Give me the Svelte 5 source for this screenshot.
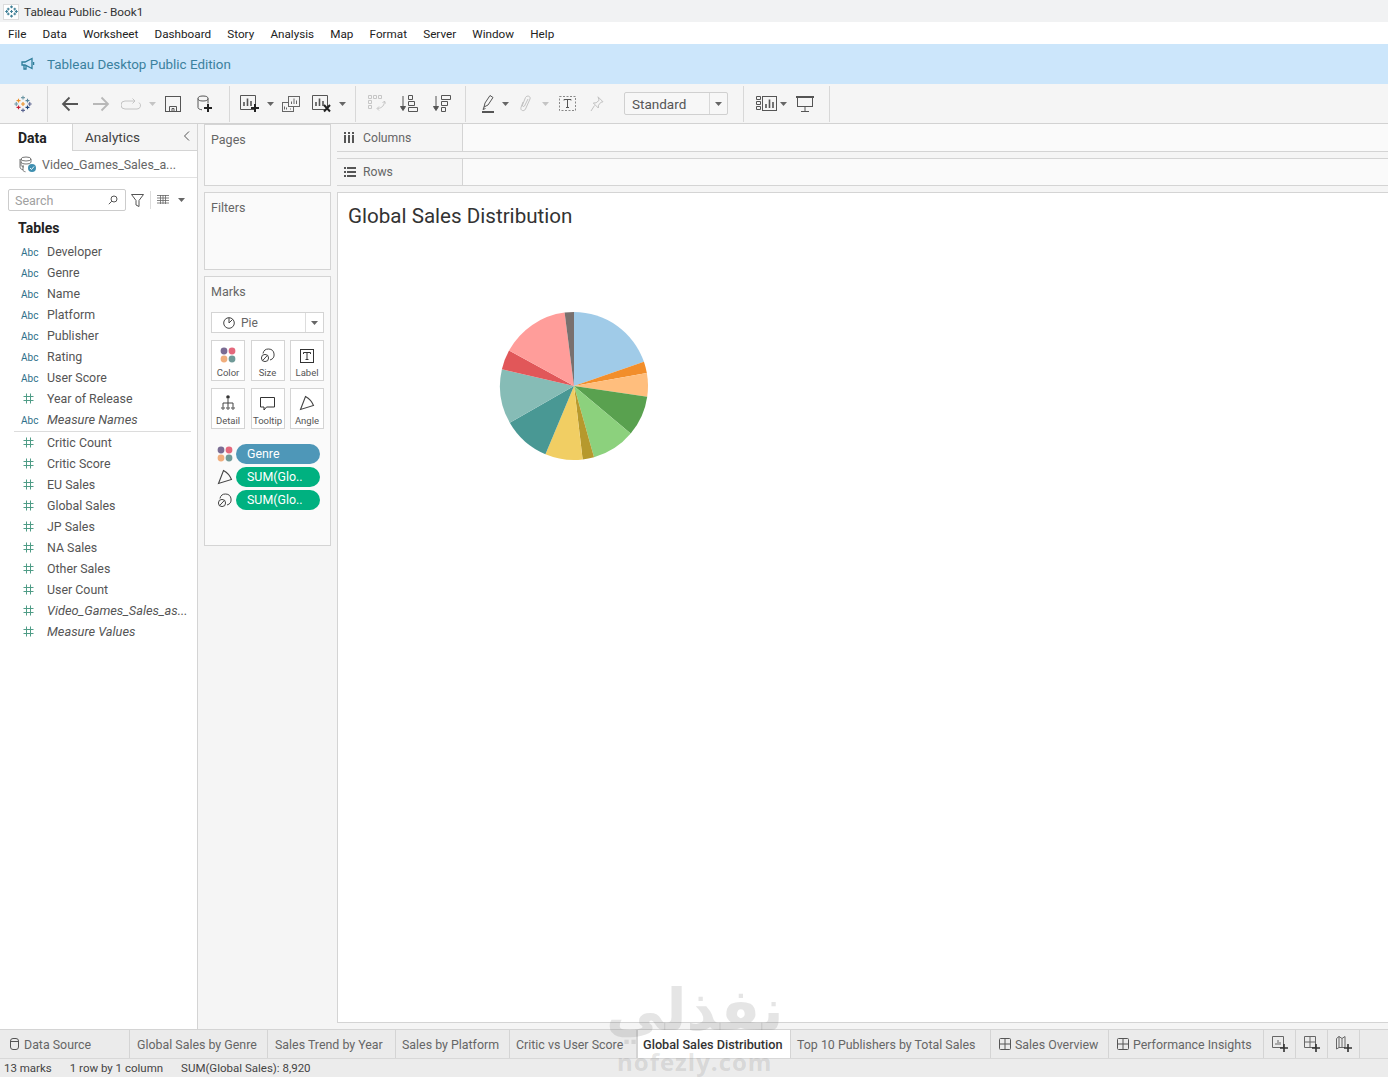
<script>
	const menu = ['File', 'Data', 'Worksheet', 'Dashboard', 'Story', 'Analysis', 'Map', 'Format', 'Server', 'Window', 'Help'];

	const dims = [
		{ name: 'Developer', kind: 'abc' },
		{ name: 'Genre', kind: 'abc' },
		{ name: 'Name', kind: 'abc' },
		{ name: 'Platform', kind: 'abc' },
		{ name: 'Publisher', kind: 'abc' },
		{ name: 'Rating', kind: 'abc' },
		{ name: 'User Score', kind: 'abc' },
		{ name: 'Year of Release', kind: 'num' },
		{ name: 'Measure Names', kind: 'abc', gen: true }
	];

	const measures = [
		{ name: 'Critic Count' },
		{ name: 'Critic Score' },
		{ name: 'EU Sales' },
		{ name: 'Global Sales' },
		{ name: 'JP Sales' },
		{ name: 'NA Sales' },
		{ name: 'Other Sales' },
		{ name: 'User Count' },
		{ name: 'Video_Games_Sales_as...', gen: true },
		{ name: 'Measure Values', gen: true }
	];

	// slice end angles in degrees, clockwise from 12 o'clock
	const slices = [
		[70.9, '#a0cbe8'],
		[79.9, '#f28e2b'],
		[98.3, '#ffbe7d'],
		[130, '#59a14f'],
		[164.3, '#8cd17d'],
		[173.3, '#b6992d'],
		[202.7, '#f1ce63'],
		[240.2, '#499894'],
		[283, '#86bcb6'],
		[298.6, '#e15759'],
		[352.7, '#ff9d9a'],
		[360, '#79706e']
	];

	function pt(deg) {
		const a = (deg * Math.PI) / 180;
		return `${(75 + 74 * Math.sin(a)).toFixed(2)} ${(75 - 74 * Math.cos(a)).toFixed(2)}`;
	}

	const wedges = slices.map(([end, color], i) => {
		const start = i ? slices[i - 1][0] : 0;
		return { color, d: `M75 75L${pt(start)}A74 74 0 0 1 ${pt(end)}Z` };
	});

	const tabs = [
		{ name: 'Global Sales by Genre', cls: 'tab-genre' },
		{ name: 'Sales Trend by Year', cls: 'tab-trend' },
		{ name: 'Sales by Platform', cls: 'tab-platform' },
		{ name: 'Critic vs User Score', cls: 'tab-critic' },
		{ name: 'Global Sales Distribution', cls: 'active' },
		{ name: 'Top 10 Publishers by Total Sales', cls: 'tab-top' },
		{ name: 'Sales Overview', cls: 'tab-overview', dash: true },
		{ name: 'Performance Insights', cls: 'tab-perf', dash: true }
	];

	const plusses = [
		[12, 3.5, '#7099a6'], [6, 7.5, '#eb912b'], [18, 7.5, '#5b879b'], [12, 12, '#eb912b'],
		[3, 12, '#7099a6'], [21, 12, '#5b6591'], [6, 16.5, '#c72035'], [18, 16.5, '#1f447a'], [12, 20.5, '#5b6591']
	];
</script>

{#snippet caret(light = false)}
	<svg class="caret" class:light width="7" height="4" viewBox="0 0 7 4"><path d="M0 0h7L3.5 4z" /></svg>
{/snippet}

{#snippet logo(size, mono = false)}
	<svg width={size} height={size} viewBox="0 0 24 24" fill="none" stroke-width={mono ? 2 : 1.5}>
		{#each plusses as [x, y, c]}
			<path d="M{x - 2.6} {y}h5.2M{x} {y - 2.6}v5.2" stroke={mono ? '#3f7f96' : c} />
		{/each}
	</svg>
{/snippet}

{#snippet numIcon()}
	<svg class="hash" width="11" height="11" viewBox="0 0 11 11" fill="none" stroke="#4f9c86" stroke-width="1">
		<path d="M3.5 .5v10M7.5 .5v10M.5 3.5h10M.5 7.5h10" />
	</svg>
{/snippet}

{#snippet colorDots()}
	<svg width="16" height="16" viewBox="0 0 16 16">
		<circle cx="4" cy="4" r="3.4" fill="#7a6c93" />
		<circle cx="12" cy="4" r="3.4" fill="#e4687c" />
		<circle cx="4" cy="12" r="3.4" fill="#f0ae7d" />
		<circle cx="12" cy="12" r="3.4" fill="#6f9a98" />
	</svg>
{/snippet}

{#snippet sizeIcon()}
	<svg width="16" height="16" viewBox="0 0 16 16" fill="none" stroke="#444" stroke-width="1">
		<circle cx="5" cy="11" r="3.6" />
		<path d="M3 6.5A5.6 5.6 0 1 1 10 13" />
		<path d="M2.6 13.6L7.4 8.4" />
	</svg>
{/snippet}

{#snippet angleIcon()}
	<svg width="16" height="16" viewBox="0 0 16 16" fill="none" stroke="#444" stroke-width="1.1">
		<path d="M1.5 14.5L6.5 1.5C10 3.4 13 6.6 14.5 10.5z" />
	</svg>
{/snippet}

{#snippet dashIcon()}
	<svg width="12" height="12" viewBox="0 0 12 12" fill="none" stroke="#555" stroke-width="1">
		<rect x=".5" y=".5" width="11" height="11" rx="1" />
		<path d="M6 .5v11M.5 6h11" />
	</svg>
{/snippet}

<div class="app">
	<header class="title">
		<span class="app-ico">{@render logo(13, true)}</span>
		<span>Tableau Public - Book1</span>
	</header>

	<nav class="menu">
		{#each menu as m}
			<span>{m}</span>
		{/each}
	</nav>

	<div class="banner">
		<svg width="14" height="14" viewBox="0 0 14 14" fill="none" stroke="#2d7d9a" stroke-width="1.3">
			<path d="M1 5h3l7-3.5v10L4 8H1z" />
			<path d="M3 8v4h2V8.600" />
			<path d="M12.600 5v3" />
		</svg>
		<span>Tableau Desktop Public Edition</span>
	</div>

	<div class="toolbar">
		<span class="tool w30">{@render logo(18)}</span>
		<i class="sep m9"></i>
		<span class="tool w30 m7">
			<svg width="18" height="16" viewBox="0 0 18 16" fill="none" stroke="#555" stroke-width="1.8">
				<path d="M17 8H2M8.500 1.500L2 8l6.500 6.500" />
			</svg>
		</span>
		<span class="tool w30 m1">
			<svg width="18" height="16" viewBox="0 0 18 16" fill="none" stroke="#b8b8b8" stroke-width="1.8">
				<path d="M1 8h15M9.500 1.500L16 8l-6.500 6.500" />
			</svg>
		</span>
		<span class="tool w22 m4">
			<svg width="20" height="12" viewBox="0 0 20 12" fill="none" stroke="#c4c4c4" stroke-width="1">
				<path d="M13 3H4a3.500 3.500 0 0 0 0 8h12a3.500 3.500 0 0 0 2-6.400" />
				<path d="M11.500 .5L14 3l-2.500 2.500" />
			</svg>
		</span>
		<span class="tool w10 m5">{@render caret(true)}</span>
		<span class="tool w30 m1">
			<svg width="16" height="16" viewBox="0 0 16 16" fill="none" stroke="#555" stroke-width="1">
				<rect x=".5" y=".5" width="15" height="15" />
				<path d="M4.500 15.500v-5h7v5M7 15.500v-3h2v3" />
			</svg>
		</span>
		<span class="tool w30 m2">
			<svg width="16" height="18" viewBox="0 0 16 18" fill="none" stroke="#555" stroke-width="1">
				<ellipse cx="6" cy="3.500" rx="5" ry="2.500" />
				<path d="M1 3.500v9c0 1.200 1.600 2 4 2.300M11 3.500v5" />
				<path d="M11 9v8M7 13h8" stroke="#222" stroke-width="2" />
			</svg>
		</span>
		<i class="sep m9"></i>
		<span class="tool w30 m5">
			<svg width="20" height="18" viewBox="0 0 20 18" fill="none">
				<path d="M.5 .5h15v14H.5z" stroke="#555" />
				<path d="M4 11V7M7.500 11V3.500M11 11V6" stroke="#555" stroke-width="1.600" />
				<path d="M15 9v8M11 13h8" stroke="#222" stroke-width="2" />
			</svg>
		</span>
		<span class="tool w10">{@render caret()}</span>
		<span class="tool w30 m1">
			<svg width="18" height="16" viewBox="0 0 18 16" fill="none" stroke="#666">
				<rect x=".5" y="6.500" width="11" height="9" />
				<rect x="6.500" y=".5" width="11" height="10" fill="#f5f5f5" />
				<path d="M9.500 8V5.500M12 8V2.500M14.500 8V4.500M2.500 13.500v-3M4.500 13.500v-2M8.500 13.500v-1" />
			</svg>
		</span>
		<span class="tool w30 m1">
			<svg width="20" height="18" viewBox="0 0 20 18" fill="none">
				<path d="M.5 .5h15v14H.5z" stroke="#555" />
				<path d="M4 11V7M7.500 11V3.500M11 11V6" stroke="#555" stroke-width="1.600" />
				<path d="M12 10l6 6.500M18 10l-6 6.500" stroke="#222" stroke-width="2" />
			</svg>
		</span>
		<span class="tool w10">{@render caret()}</span>
		<i class="sep m8"></i>
		<span class="tool w30 m6">
			<svg width="18" height="17" viewBox="0 0 18 17" fill="none" stroke="#c6c6c6">
				<path d="M.5.5h3v3h-3zM5.500.5h3v3h-3zM10.500.5h3v3h-3zM.5 5.500h3v3h-3zM.5 10.500h3v3h-3z" />
				<path d="M16.500 6c0 4-2 7-7 7.500M14.500 8l2-2 1 2.500M11 11.500l-2 2 2 2" />
			</svg>
		</span>
		<span class="tool w30 m2">
			<svg width="18" height="17" viewBox="0 0 18 17" fill="none" stroke="#555">
				<path d="M3 1v13M.5 11.500L3 15.500l2.500-4z" fill="#555" />
				<path d="M8.500.5h4v4h-4zM8.500 6.500h6v4h-6zM8.500 12.500h9v4h-9z" />
			</svg>
		</span>
		<span class="tool w30 m3">
			<svg width="18" height="17" viewBox="0 0 18 17" fill="none" stroke="#555">
				<path d="M3 1v13M.5 11.500L3 15.500l2.500-4z" fill="#555" />
				<path d="M8.500.5h9v4h-9zM8.500 6.500h6v4h-6zM8.500 12.500h4v4h-4z" />
			</svg>
		</span>
		<i class="sep m8"></i>
		<span class="tool w20 m12">
			<svg width="14" height="18" viewBox="0 0 14 18" fill="none" stroke="#555">
				<path d="M3 12l1-4 5-7.500 3 2-5 7.500zM3 12l-1 2.500 2.500-1" />
				<path d="M1 17h12" stroke-width="2" />
			</svg>
		</span>
		<span class="tool w10 m2">{@render caret()}</span>
		<span class="tool w20 m5">
			<svg width="13" height="17" viewBox="0 0 13 17" fill="none" stroke="#c2c2c2">
				<path d="M4 7l-2 5.500c-1 3 3 4.500 4.500 1.500l4.500-10c1-3-3-4-4.500-1.500L3.500 10c-.5 1.500 1 2 2 1L9 4" />
			</svg>
		</span>
		<span class="tool w10 m5">{@render caret(true)}</span>
		<span class="tool w20 m7">
			<svg width="17" height="15" viewBox="0 0 17 15" fill="none" stroke="#888">
				<rect x=".5" y=".5" width="16" height="14" stroke-dasharray="2 1.500" />
				<path d="M5 4.500V3.500h7v1M8.500 3.500v8M7 11.500h3" stroke="#555" />
			</svg>
		</span>
		<span class="tool w20 m10">
			<svg width="14" height="16" viewBox="0 0 14 16" fill="none" stroke="#c2c2c2">
				<path d="M8 .8l5 5-2 .4-2.500 3-.2 2.800-5-5 2.800-.2 3-2.500z" />
				<path d="M4.500 9.500L1 15" />
			</svg>
		</span>
		<div class="std m17">
			<span>Standard</span>
			<b>{@render caret()}</b>
		</div>
		<i class="sep m15"></i>
		<span class="tool w24 m10">
			<svg width="21" height="15" viewBox="0 0 21 15" fill="none" stroke="#555">
				<path d="M.5.5h4v3h-4zM.5 5.500h4v3h-4zM.5 10.500h4v3h-4z" />
				<rect x="6.500" y=".5" width="14" height="14" />
				<path d="M10 12V8M13.500 12V3.500M17 12V6" stroke-width="1.600" />
			</svg>
		</span>
		<span class="tool w10">{@render caret()}</span>
		<span class="tool w30 m2">
			<svg width="18" height="16" viewBox="0 0 18 16" fill="none" stroke="#555">
				<path d="M0 1h18" stroke-width="2" />
				<rect x="1.500" y="1" width="15" height="9.500" />
				<path d="M9 10.500v5M5 15.500h8" />
			</svg>
		</span>
		<i class="sep m9"></i>
	</div>

	<main class="main">
		<aside class="data">
			<div class="data-tabs">
				<span class="dt on">Data</span>
				<span class="dt">Analytics</span>
				<svg class="collapse" width="7" height="10" viewBox="0 0 7 10" fill="none" stroke="#555">
					<path d="M6 .5L1.500 5 6 9.500" />
				</svg>
			</div>
			<div class="source">
				<svg width="18" height="17" viewBox="0 0 18 17" fill="none" stroke="#666" stroke-width=".9">
					<ellipse cx="7" cy="3" rx="5" ry="2" />
					<path d="M2 3v3c0 1 2 2 5 2s5-1 5-2V3M2 6v3c0 1 1 1.800 3 2" />
					<path d="M1 3v8c0 1.500 1 2.200 3 2.800M4 9v5c0 1 1 1.500 2.500 1.800" />
					<circle cx="13" cy="12" r="4" fill="#3f8fb0" stroke="none" />
					<path d="M11 12l1.500 1.500 2.500-3" stroke="#fff" />
				</svg>
				<span>Video_Games_Sales_a...</span>
			</div>
			<div class="search-row">
				<div class="search">
					<span>Search</span>
					<svg width="10" height="10" viewBox="0 0 10 10" fill="none" stroke="#555">
						<circle cx="6" cy="4" r="3" />
						<path d="M3.800 6.200L.8 9.200" />
					</svg>
				</div>
				<svg class="funnel" width="13" height="13" viewBox="0 0 13 13" fill="none" stroke="#555">
					<path d="M.5.500h12L8 6.500v6l-3-1.500V6.500z" />
				</svg>
				<i class="vsep"></i>
				<svg width="12" height="10" viewBox="0 0 12 10" fill="none" stroke="#666">
					<path d="M0 .5h12M0 3h12M0 5.500h12M0 8h12M3.500 0v9M6 0v9M8.500 0v9" stroke-width=".8" />
				</svg>
				<span class="list-caret">{@render caret()}</span>
			</div>
			<h3>Tables</h3>
			<ul class="fields">
				{#each dims as f}
					<li>
						<span class="ficon">
							{#if f.kind === 'abc'}<span class="abc">Abc</span>{:else}{@render numIcon()}{/if}
						</span>
						<span class:gen={f.gen}>{f.name}</span>
					</li>
				{/each}
			</ul>
			<hr />
			<ul class="fields">
				{#each measures as f}
					<li>
						<span class="ficon">{@render numIcon()}</span>
						<span class:gen={f.gen}>{f.name}</span>
					</li>
				{/each}
			</ul>
		</aside>

		<section class="cards">
			<div class="card pages">Pages</div>
			<div class="card filters">Filters</div>
			<div class="card marks">
				<div>Marks</div>
				<div class="mark-type">
					<svg width="12" height="12" viewBox="0 0 12 12" fill="none" stroke="#444">
						<circle cx="6" cy="6" r="5.300" />
						<path d="M6 .8V6l3.600-3.600" />
					</svg>
					<span>Pie</span>
					<b>{@render caret()}</b>
				</div>
				<div class="mark-btns">
					<div class="mb">{@render colorDots()}<span>Color</span></div>
					<div class="mb">{@render sizeIcon()}<span>Size</span></div>
					<div class="mb">
						<svg width="14" height="14" viewBox="0 0 14 14" fill="none" stroke="#333">
							<rect x=".5" y=".5" width="13" height="13" />
							<path d="M3.500 5V3.500h7V5M7 3.500v7M5.500 10.500h3" />
						</svg>
						<span>Label</span>
					</div>
					<div class="mb">
						<svg width="14" height="16" viewBox="0 0 14 16" fill="none" stroke="#444">
							<circle cx="7" cy="2" r="1.800" fill="#333" stroke="none" />
							<path d="M7 4v4M2 11V8h10v3M7 8v3" />
							<circle cx="2" cy="13" r="1.200" />
							<circle cx="7" cy="13" r="1.200" />
							<circle cx="12" cy="13" r="1.200" />
						</svg>
						<span>Detail</span>
					</div>
					<div class="mb">
						<svg width="15" height="14" viewBox="0 0 15 14" fill="none" stroke="#333">
							<path d="M.5.5h14v9.500H6.500L4 13v-3H.5z" />
						</svg>
						<span>Tooltip</span>
					</div>
					<div class="mb">{@render angleIcon()}<span>Angle</span></div>
				</div>
				<div class="pill-row">
					{@render colorDots()}
					<span class="pill blue">Genre</span>
				</div>
				<div class="pill-row">
					{@render angleIcon()}
					<span class="pill">SUM(Glo..</span>
				</div>
				<div class="pill-row">
					{@render sizeIcon()}
					<span class="pill">SUM(Glo..</span>
				</div>
			</div>
		</section>

		<section class="work">
			<div class="shelf">
				<div class="shelf-label">
					<svg width="10" height="11" viewBox="0 0 10 11" fill="#555">
						<path d="M0 3h2v8H0zM4 3h2v8H4zM8 3h2v8H8zM0 0h2v2H0zM4 0h2v2H4zM8 0h2v2H8z" />
					</svg>
					<span>Columns</span>
				</div>
			</div>
			<div class="shelf">
				<div class="shelf-label rows">
					<svg width="12" height="10" viewBox="0 0 12 10" fill="#555">
						<path d="M0 0h2v2H0zM3 0h9v2H3zM0 4h2v2H0zM3 4h9v2H3zM0 8h2v2H0zM3 8h9v2H3z" />
					</svg>
					<span>Rows</span>
				</div>
			</div>
			<div class="viz">
				<h1>Global Sales Distribution</h1>
				<svg class="pie" width="150" height="150" viewBox="0 0 150 150">
					{#each wedges as w}
						<path d={w.d} fill={w.color} />
					{/each}
				</svg>
			</div>
		</section>
	</main>

	<footer class="tabs">
		<div class="tab tab-ds">
			<svg width="9" height="12" viewBox="0 0 9 12" fill="none" stroke="#555">
				<rect x=".5" y=".5" width="8" height="11" rx="2.500" />
				<path d="M.5 3.500h8" />
			</svg>
			<span>Data Source</span>
		</div>
		{#each tabs as t}
			<div class="tab {t.cls}">
				{#if t.dash}{@render dashIcon()}{/if}
				<span>{t.name}</span>
			</div>
		{/each}
		<div class="tab add">
			<svg width="16" height="16" viewBox="0 0 16 16" fill="none" stroke="#666">
				<path d="M.5.5h11v11H.5zM4 9V7M6 9V4M8 9V6" />
				<path d="M12 8v8M8 12h8" stroke="#333" stroke-width="1.600" />
			</svg>
		</div>
		<div class="tab add">
			<svg width="16" height="16" viewBox="0 0 16 16" fill="none" stroke="#666">
				<path d="M.5.5h11v11H.5zM6 .5v11M.5 6h11" />
				<path d="M12 8v8M8 12h8" stroke="#333" stroke-width="1.600" />
			</svg>
		</div>
		<div class="tab add">
			<svg width="16" height="16" viewBox="0 0 16 16" fill="none" stroke="#666">
				<path d="M.5 2.500L3 .5l3 2 3-2v11H3L.5 13zM3 .5v11M6 2.500v9" />
				<path d="M12 8v8M8 12h8" stroke="#333" stroke-width="1.600" />
			</svg>
		</div>
	</footer>

	<div class="status">
		<span>13 marks</span>
		<span>1 row by 1 column</span>
		<span>SUM(Global Sales): 8,920</span>
	</div>

	<div class="mark-ar" lang="ar" dir="rtl">نفذلي</div>
	<div class="mark-en">nofezly.com</div>
</div>

<style>
	:global(body) {
		margin: 0;
		background: #fff;
	}

	.app {
		position: relative;
		width: 1388px;
		height: 1077px;
		overflow: hidden;
		display: flex;
		flex-direction: column;
		font-family: Roboto, 'Liberation Sans', sans-serif;
		font-size: 11.800px;
		color: #555;
	}

	svg {
		display: block;
		flex: none;
	}

	.title {
		height: 22px;
		flex: none;
		box-sizing: border-box;
		padding: 1px 0 0 3px;
		display: flex;
		align-items: center;
		gap: 5px;
		background: #f1f2f3;
		color: #333;
	}

	.app-ico {
		width: 16px;
		height: 16px;
		display: flex;
		align-items: center;
		justify-content: center;
		background: #fff;
		outline: 1px solid #dcdcdc;
		outline-offset: -1px;
	}

	.menu {
		height: 22px;
		flex: none;
		box-sizing: border-box;
		padding: 1px 0 0 8px;
		display: flex;
		align-items: center;
		gap: 16.200px;
		background: #fff;
		color: #222;
		font-size: 11.700px;
	}

	.banner {
		height: 40px;
		flex: none;
		display: flex;
		align-items: center;
		gap: 12px;
		padding-left: 21px;
		background: #cce6fb;
		color: #3b819e;
		font-size: 13.400px;
	}

	.toolbar {
		height: 40px;
		flex: none;
		box-sizing: border-box;
		display: flex;
		align-items: center;
		padding-left: 8px;
		background: #f5f5f5;
		border-bottom: 1px solid #d2d2d2;
	}

	.tool {
		display: flex;
		align-items: center;
		justify-content: center;
		flex: none;
	}

	.w30 { width: 30px; }
	.w24 { width: 24px; }
	.w22 { width: 22px; }
	.w20 { width: 20px; }
	.w10 { width: 10px; }

	.m1 { margin-left: 1px; }
	.m2 { margin-left: 2px; }
	.m3 { margin-left: 3px; }
	.m4 { margin-left: 4px; }
	.m5 { margin-left: 5px; }
	.m6 { margin-left: 6px; }
	.m7 { margin-left: 7px; }
	.m8 { margin-left: 8px; }
	.m9 { margin-left: 9px; }
	.m10 { margin-left: 10px; }
	.m12 { margin-left: 12px; }
	.m15 { margin-left: 15px; }
	.m17 { margin-left: 17px; }

	.sep {
		width: 1px;
		height: 36px;
		background: #d8d8d8;
		flex: none;
	}

	.caret {
		fill: #666;
	}

	.caret.light {
		fill: #c4c4c4;
	}

	.std {
		width: 104px;
		height: 23px;
		box-sizing: border-box;
		flex: none;
		display: flex;
		align-items: center;
		justify-content: space-between;
		padding-left: 7px;
		border: 1px solid #d0d0d0;
		border-radius: 2px;
		background: #f7f7f7;
		font-size: 13.500px;
		color: #555;
	}

	.std b {
		width: 17px;
		height: 100%;
		display: flex;
		align-items: center;
		justify-content: center;
		border-left: 1px solid #d8d8d8;
	}

	.main {
		flex: 1;
		min-height: 0;
		display: flex;
		background: #f5f5f5;
	}

	.data {
		width: 198px;
		flex: none;
		box-sizing: border-box;
		background: #fff;
		border-right: 1px solid #d4d4d4;
	}

	.data-tabs {
		position: relative;
		height: 27px;
		display: flex;
	}

	.dt {
		display: flex;
		align-items: center;
		box-sizing: border-box;
		font-size: 13.500px;
		color: #444;
		flex: 1;
		padding-left: 12px;
		background: #f5f5f5;
		border-bottom: 1px solid #d4d4d4;
	}

	.dt.on {
		flex: none;
		width: 73px;
		padding-left: 18px;
		background: #fff;
		font-size: 14px;
		font-weight: 700;
		color: #222;
		border-bottom: 0;
		border-right: 1px solid #d4d4d4;
	}

	.collapse {
		position: absolute;
		right: 7px;
		top: 7px;
	}

	.source {
		height: 27px;
		display: flex;
		align-items: center;
		gap: 5px;
		padding: 0 0 0 19px;
		box-sizing: border-box;
		font-size: 12.400px;
		color: #666;
		border-bottom: 1px solid #e2e2e2;
	}

	.search-row {
		display: flex;
		align-items: center;
		height: 22px;
		margin-top: 11px;
		padding-left: 8px;
	}

	.search {
		width: 118px;
		height: 22px;
		box-sizing: border-box;
		display: flex;
		align-items: center;
		justify-content: space-between;
		padding: 0 7px 0 6px;
		border: 1px solid #ccc;
		border-radius: 2px;
		font-size: 12.500px;
		color: #a0a0a0;
	}

	.funnel {
		margin-left: 5px;
	}

	.vsep {
		width: 1px;
		height: 18px;
		margin: 0 6px;
		background: #ddd;
	}

	.list-caret {
		margin-left: 9px;
	}

	h3 {
		margin: 7px 0 3px 18px;
		font-size: 14px;
		line-height: 20px;
		font-weight: 700;
		color: #222;
	}

	.fields {
		list-style: none;
		margin: 0;
		padding: 0;
	}

	.fields li {
		height: 21px;
		display: flex;
		align-items: center;
		font-size: 12.400px;
		color: #555;
	}

	.ficon {
		width: 47px;
		padding-left: 21px;
		box-sizing: border-box;
		flex: none;
	}

	.hash {
		margin-left: 2px;
	}

	.abc {
		font-size: 10px;
		color: #2f6f8a;
	}

	.gen {
		font-style: italic;
		font-size: 12.800px;
	}

	hr {
		margin: 1px 6px 0 14px;
		border: 0;
		border-top: 1px solid #dcdcdc;
	}

	.cards {
		width: 139px;
		flex: none;
		box-sizing: border-box;
		padding: 0 6px;
		display: flex;
		flex-direction: column;
		align-items: stretch;
		gap: 6px;
	}

	.card {
		box-sizing: border-box;
		padding: 7px 6px;
		border: 1px solid #d4d4d4;
		background: #fafafa;
		font-size: 12.500px;
		color: #666;
		line-height: 16px;
	}

	.pages { height: 62px; }
	.filters { height: 78px; }
	.marks { height: 270px; }

	.mark-type {
		height: 21px;
		box-sizing: border-box;
		margin-top: 12px;
		display: flex;
		align-items: center;
		gap: 6px;
		padding-left: 11px;
		border: 1px solid #d4d4d4;
		background: #fff;
		font-size: 12px;
	}

	.mark-type b {
		margin-left: auto;
		width: 17px;
		height: 100%;
		display: flex;
		align-items: center;
		justify-content: center;
		border-left: 1px solid #ddd;
	}

	.mark-btns {
		margin-top: 7px;
		display: grid;
		grid-template-columns: 34px 34px 34px;
		justify-content: space-between;
		row-gap: 7px;
	}

	.mb {
		height: 41px;
		box-sizing: border-box;
		display: flex;
		flex-direction: column;
		align-items: center;
		justify-content: flex-end;
		gap: 4px;
		padding-bottom: 1px;
		border: 1px solid #d4d4d4;
		background: #fff;
		font-size: 9.500px;
		line-height: 12px;
		color: #555;
	}

	.pill-row {
		height: 20px;
		margin-top: 3px;
		padding-left: 6px;
		display: flex;
		align-items: center;
		gap: 3px;
	}

	.mark-btns + .pill-row {
		margin-top: 15px;
	}

	.pill {
		width: 84px;
		height: 20px;
		box-sizing: border-box;
		padding-left: 11px;
		border-radius: 10px;
		background: #00b180;
		color: #fff;
		font-size: 12.400px;
		line-height: 20px;
	}

	.pill.blue {
		background: #4e97b8;
	}

	.work {
		flex: 1;
		min-width: 0;
		display: flex;
		flex-direction: column;
	}

	.shelf {
		height: 28px;
		flex: none;
		margin-bottom: 6px;
		box-sizing: border-box;
		background: #fafafa;
		border-bottom: 1px solid #d4d4d4;
		display: flex;
	}

	.shelf + .shelf {
		border-top: 1px solid #d4d4d4;
	}

	.shelf-label {
		width: 126px;
		display: flex;
		align-items: center;
		gap: 9px;
		padding-left: 7px;
		box-sizing: border-box;
		background: #f5f5f5;
		border-right: 1px solid #d4d4d4;
		color: #666;
		font-size: 12.200px;
	}

	.shelf-label.rows {
		gap: 7px;
	}

	.viz {
		height: 831px;
		box-sizing: border-box;
		background: #fff;
		border-left: 1px solid #d4d4d4;
		border-top: 1px solid #d4d4d4;
		border-bottom: 1px solid #d4d4d4;
		padding: 10px 0 0 10px;
	}

	h1 {
		margin: 0;
		font-size: 20.600px;
		line-height: 26px;
		font-weight: 400;
		color: #333;
	}

	.pie {
		margin: 82px 0 0 150.500px;
	}

	.tabs {
		height: 30px;
		flex: none;
		box-sizing: border-box;
		display: flex;
		background: #ebebeb;
		border-top: 1px solid #d4d4d4;
		border-bottom: 1px solid #d8d8d8;
	}

	.tab {
		box-sizing: border-box;
		display: flex;
		align-items: center;
		gap: 4px;
		padding-left: 6px;
		border-right: 1px solid #d4d4d4;
		font-size: 12.400px;
		color: #666;
		white-space: nowrap;
	}

	.tab-ds { width: 130px; padding-left: 10px; gap: 5px; }
	.tab-genre { width: 138px; padding-left: 7px; }
	.tab-trend { width: 128px; padding-left: 7px; }
	.tab-platform { width: 114px; }
	.tab-critic { width: 127px; }
	.active {
		width: 154px;
		padding-left: 5px;
		background: #fff;
		color: #333;
		font-size: 12.700px;
		font-weight: 500;
		border-left: 1px solid #d4d4d4;
	}
	.tab-top { width: 200px; }
	.tab-overview { width: 118px; padding-left: 8px; }
	.tab-perf { width: 155px; padding-left: 8px; }
	.add { width: 32px; padding-left: 8px; }

	.status {
		height: 18px;
		flex: none;
		display: flex;
		align-items: center;
		gap: 18px;
		padding-left: 4px;
		background: #ececec;
		color: #444;
		font-size: 11.500px;
	}

	.mark-ar,
	.mark-en {
		position: absolute;
		pointer-events: none;
		color: rgba(110, 110, 110, 0.18);
		font-weight: 700;
		white-space: nowrap;
	}

	.mark-ar {
		left: 606px;
		top: 975px;
		font-family: 'DejaVu Sans', sans-serif;
		font-size: 58px;
		line-height: 70px;
	}

	.mark-en {
		left: 617px;
		top: 1047px;
		font-family: 'Open Sans', sans-serif;
		font-size: 24px;
		line-height: 30px;
		letter-spacing: 1px;
	}
</style>
